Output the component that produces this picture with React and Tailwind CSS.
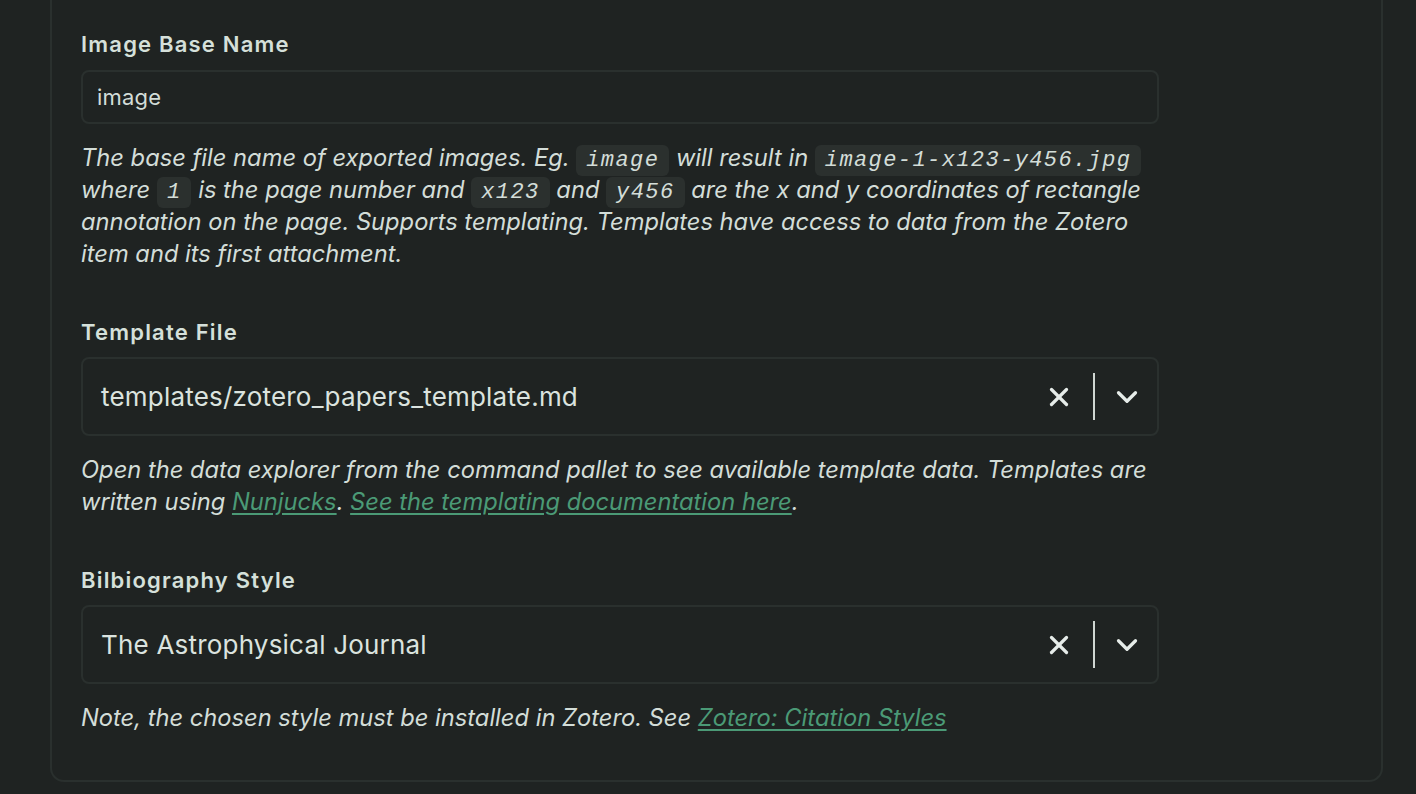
import { X, ChevronDown } from "lucide-react";

function Code({ children }) {
  return (
    <code className="whitespace-nowrap rounded-md bg-[#2b302e] px-[10px] py-[3px] font-['Liberation_Mono',monospace] text-[22px] leading-[16px] tracking-[1.4px]">
      {children}
    </code>
  );
}

function Label({ children, gap = "mb-[12px]" }) {
  return (
    <div className={`${gap} text-[22px] font-semibold leading-[28px] tracking-[1.2px] text-[#d5e0da]`}>
      {children}
    </div>
  );
}

function SelectBox({ value }) {
  return (
    <div className="flex h-[79px] items-center rounded-lg border-2 border-[#2a302e] bg-[#1f2322] pl-[18px] pr-[13px]">
      <span className="flex-1 text-[26px] tracking-[0.2px] text-[#dbe3df]">{value}</span>
      <X size={30} strokeWidth={2.6} className="text-[#e6ece9]" />
      <div className="ml-[19px] mr-[15px] h-[47px] w-[2px] bg-[#cfd6d2]" />
      <ChevronDown size={34} strokeWidth={2.3} className="text-[#e6ece9]" />
    </div>
  );
}

function Link({ children }) {
  return <a className="text-[#4b9a76] underline underline-offset-[3px]">{children}</a>;
}

function Help({ children }) {
  return (
    <p className="mt-[18px] text-[23.7px] italic leading-[32px] text-[#d3ddd8]">
      {children}
    </p>
  );
}

export default function App() {
  return (
    <div className="min-h-[794px] bg-[#1f2322] font-['Inter',sans-serif] text-[#d3ddd8]">
      <div className="ml-[50px] w-[1333px] rounded-b-[14px] border-x-2 border-b-2 border-[#2a302e] px-[29px] pb-[46px] pt-[30px]">
        <div className="w-[1078px]">
          <Label>Image Base Name</Label>
          <div className="flex h-[54px] items-center rounded-lg border-2 border-[#2a302e] px-[14px] text-[22px] tracking-[0.2px] text-[#d3ddd8]">
            image
          </div>
          <Help>
            The base file name of exported images. Eg. <Code>image</Code> will result in{" "}
            <Code>image-1-x123-y456.jpg</Code> where <Code>1</Code> is the page number and{" "}
            <Code>x123</Code> and <Code>y456</Code> are the x and y coordinates of rectangle
            annotation on the page. Supports templating. Templates have access to data from the
            Zotero item and its first attachment.
          </Help>

          <div className="mt-[48px]">
            <Label gap="mb-[11px]">Template File</Label>
            <SelectBox value="templates/zotero_papers_template.md" />
            <Help>
              Open the data explorer from the command pallet to see available template data.
              Templates are written using <Link>Nunjucks</Link>.{" "}
              <Link>See the templating documentation here</Link>.
            </Help>
          </div>

          <div className="mt-[48px]">
            <Label gap="mb-[11px]">Bilbiography Style</Label>
            <SelectBox value="The Astrophysical Journal" />
            <Help>
              Note, the chosen style must be installed in Zotero. See{" "}
              <Link>Zotero: Citation Styles</Link>
            </Help>
          </div>
        </div>
      </div>
    </div>
  );
}
